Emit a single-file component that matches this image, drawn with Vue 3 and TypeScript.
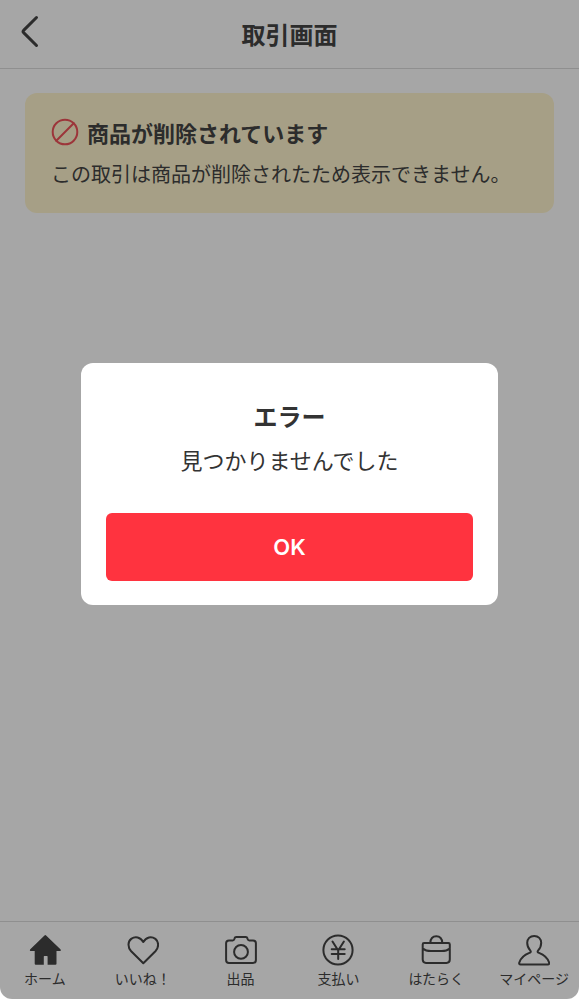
<script setup lang="ts">
import { ref } from 'vue'

type IconName = 'home' | 'heart' | 'camera' | 'yen' | 'bag' | 'person'

interface Tab {
  icon: IconName
  label: string
}

const tabs: Tab[] = [
  { icon: 'home', label: 'ホーム' },
  { icon: 'heart', label: 'いいね！' },
  { icon: 'camera', label: '出品' },
  { icon: 'yen', label: '支払い' },
  { icon: 'bag', label: 'はたらく' },
  { icon: 'person', label: 'マイページ' },
]

const dialogOpen = ref(true)
</script>

<template>
  <div class="screen">
    <header class="header">
      <button class="back" type="button" aria-label="戻る">
        <svg width="20" height="34" viewBox="0 0 20 34" aria-hidden="true">
          <path d="M16.5 2.5 3.6 15.4q-1 1.1 0 2.2L16.5 30.5" />
        </svg>
      </button>
      <h1>取引画面</h1>
    </header>

    <main class="content">
      <section class="notice">
        <h2>
          <svg width="28" height="28" viewBox="0 0 28 28" aria-hidden="true">
            <circle cx="14" cy="14" r="12.3" />
            <path d="M5.3 22.7 22.7 5.3" />
          </svg>
          <span>商品が削除されています</span>
        </h2>
        <p>この取引は商品が削除されたため表示できません。</p>
      </section>
    </main>

    <nav class="tabs">
      <a v-for="tab in tabs" :key="tab.icon" href="#" class="tab">
        <svg width="32" height="32" viewBox="0 0 32 32" aria-hidden="true">
          <path
            v-if="tab.icon === 'home'"
            class="solid"
            d="M15.500 1.500q.8-.8 1.600 0L31.400 15.300q1 1.100-.2 1.700H27.500V29.700q0 1.100-1.100 1.100H18.600V22.600q0-.6-.6-.6H15.400q-.6 0-.6.6v8.200H6.800q-1.100 0-1.100-1.100V17H1.500q-1.200-.6-.2-1.700Z"
          />
          <path
            v-else-if="tab.icon === 'heart'"
            d="M16.300 29.300 4.200 17.300C.4 13.300.8 7.600 4.200 4.900 8.200 2 13.500 3 16.300 8c2.800-5 8.100-6 12.100-3.100 3.400 2.700 3.800 8.400 0 12.400Z"
          />
          <template v-else-if="tab.icon === 'camera'">
            <path d="M4 6.400H7.700q1.300 0 1.600-1.300l.3-.9q.3-1.100 1.600-1.100h9.600q1.300 0 1.600 1.100l.3.900q.3 1.300 1.600 1.300H28q2.900 0 2.900 2.900v16.700q0 2.900-2.900 2.900H4q-2.900 0-2.900-2.900V9.300Q1.100 6.400 4 6.400Z" />
            <circle cx="16" cy="17.900" r="6.900" />
          </template>
          <template v-else-if="tab.icon === 'yen'">
            <circle cx="16" cy="16" r="14.600" />
            <path d="m10.500 7.500 5.700 9 5.700-9M16.200 16.500V25M9.700 15.300h13M9.700 20h13" />
          </template>
          <template v-else-if="tab.icon === 'bag'">
            <path d="M4 9h24.400q1.400 0 1.400 1.400v15.200q0 3.300-3.300 3.300H6q-3.300 0-3.300-3.300V10.400Q2.700 9 4 9ZM2.800 14.400c2.200 2 5 2.700 8.200 2.700h10.600c3.200 0 6-.7 8.200-2.700M10.300 9c.2-4.400 2.400-6.700 6-6.700s5.800 2.300 6 6.700" />
          </template>
          <path
            v-else
            d="M16.200 1.900c-4.200 0-7 2.900-7 6.900 0 3.200 1.200 5.700 3 7.600 1 1.100.7 1.900-.8 2.500C6 21 2.600 24.500 1.300 28.500q-.6 1.900 1.300 1.900h27.200q1.900 0 1.300-1.900C29.800 24.500 26.400 21 21 18.900c-1.500-.6-1.800-1.400-.8-2.500 1.800-1.900 3-4.400 3-7.600 0-4-2.800-6.900-7-6.900Z"
          />
        </svg>
        <span>{{ tab.label }}</span>
      </a>
    </nav>

    <div v-if="dialogOpen" class="overlay">
      <section class="dialog" role="alertdialog" aria-labelledby="dialog-title" aria-describedby="dialog-text">
        <h2 id="dialog-title">エラー</h2>
        <p id="dialog-text">見つかりませんでした</p>
        <button type="button" @click="dialogOpen = false">OK</button>
      </section>
    </div>
  </div>
</template>

<style>
body {
  margin: 0;
  background: #fff;
}
</style>

<style scoped>
.screen {
  position: relative;
  display: flex;
  flex-direction: column;
  min-height: 100vh;
  overflow: hidden;
  border-radius: 0 0 12px 12px;
  background: #fff;
  color: #444;
  font-family: 'Noto Sans CJK JP', sans-serif;
}

h1,
h2,
p {
  margin: 0;
}

svg {
  display: block;
  flex: none;
  fill: none;
  stroke: currentColor;
  stroke-width: 2;
  stroke-linecap: round;
  stroke-linejoin: round;
}

button {
  border: 0;
  padding: 0;
  font: inherit;
  cursor: pointer;
}

.header {
  display: grid;
  grid-template-columns: 60px 1fr 60px;
  align-items: center;
  height: 68px;
  border-bottom: 1px solid #dcdcdc;
}

.header h1 {
  font-size: 24px;
  line-height: 36px;
  text-align: center;
}

.back {
  display: flex;
  justify-content: center;
  padding-bottom: 4px;
  background: none;
  color: inherit;
}

.back svg {
  stroke-width: 3;
}

.content {
  flex: 1;
  padding: 24px 25px;
}

.notice {
  padding: 24px 26px;
  border-radius: 12px;
  background: #fff5ce;
}

.notice h2 {
  display: flex;
  align-items: center;
  gap: 8px;
  font-size: 22px;
  line-height: 30px;
}

.notice h2 svg {
  color: #f0525a;
}

.notice p {
  margin-top: 12px;
  font-size: 20px;
  line-height: 30px;
}

.tabs {
  display: grid;
  grid-template-columns: repeat(6, 1fr);
  margin: 0 -4px;
  padding: 12px 0 10px;
  border-top: 1px solid #dcdcdc;
}

.tab {
  display: flex;
  flex-direction: column;
  align-items: center;
  gap: 2px;
  color: inherit;
  font-size: 14px;
  line-height: 21px;
  text-decoration: none;
  white-space: nowrap;
}

.solid {
  fill: currentColor;
  stroke: none;
}

.overlay {
  position: absolute;
  inset: 0;
  display: flex;
  align-items: center;
  justify-content: center;
  padding-bottom: 31px;
  background: rgba(0, 0, 0, 0.35);
}

.dialog {
  box-sizing: border-box;
  width: 72%;
  padding: 36px 25px 24px;
  border-radius: 12px;
  background: #fff;
  color: #333;
  text-align: center;
}

.dialog h2 {
  font-size: 24px;
  line-height: 34px;
}

.dialog p {
  margin-top: 10px;
  font-size: 22px;
  line-height: 32px;
}

.dialog button {
  display: block;
  width: 100%;
  height: 68px;
  margin-top: 38px;
  border-radius: 6px;
  background: #ff333f;
  color: #fff;
  font-family: Inter, sans-serif;
  font-size: 22px;
  font-weight: 600;
}
</style>
